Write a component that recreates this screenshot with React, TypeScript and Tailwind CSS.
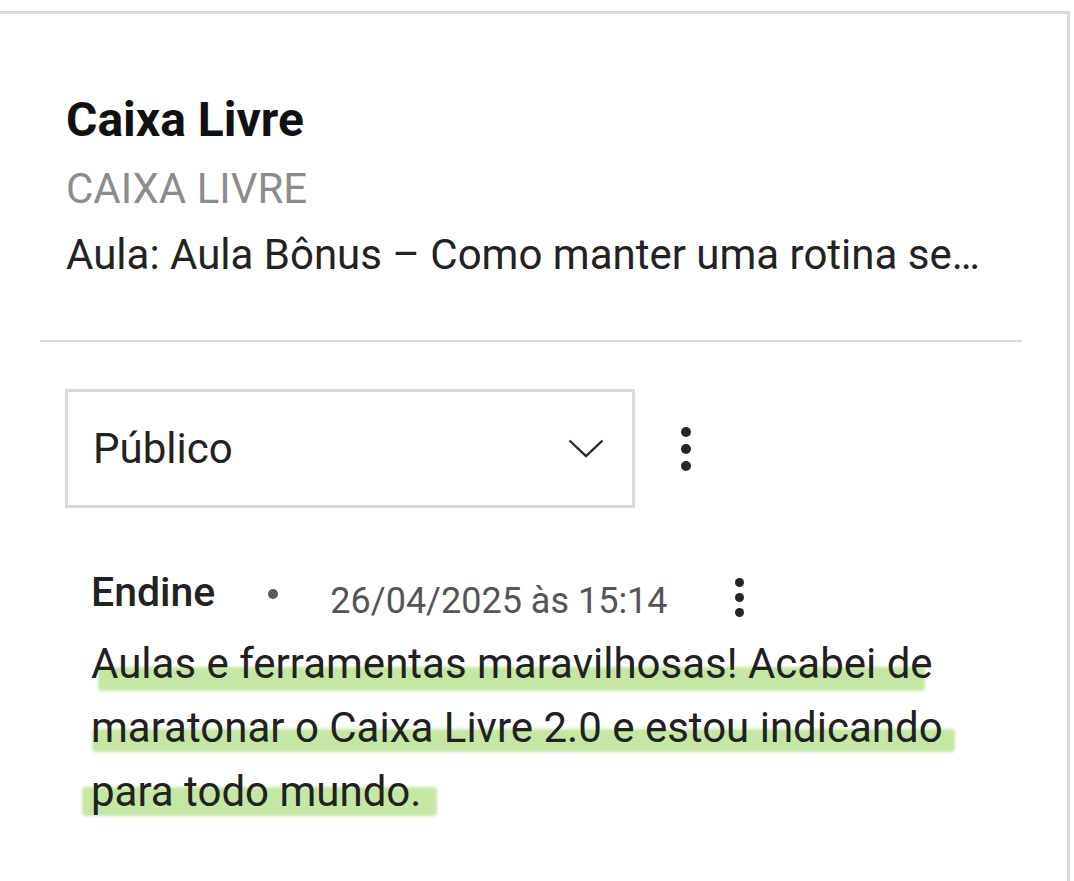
import React from "react"

function Dots({ r, gap, className }: { r: number; gap: number; className?: string }) {
  const h = r * 2 + gap * 2
  return (
    <svg width={r * 2} height={h} viewBox={`0 0 ${r * 2} ${h}`} className={className}>
      <circle cx={r} cy={r} r={r} fill="#262626" />
      <circle cx={r} cy={r + gap} r={r} fill="#262626" />
      <circle cx={r} cy={r + gap * 2} r={r} fill="#262626" />
    </svg>
  )
}

const lines = [
  { text: "Aulas e ferramentas maravilhosas! Acabei de", mark: "left-[7px] w-[827px] top-[35px] h-[24px]" },
  { text: "maratonar o Caixa Livre 2.0 e estou indicando", mark: "left-[1px] w-[863px] top-[33px] h-[23px]" },
  { text: "para todo mundo.", mark: "left-[-9px] w-[355px] top-[27px] h-[29px]" },
]

export default function App() {
  return (
    <div className="min-h-screen bg-white font-['Roboto',sans-serif] pt-[11px]">
      <div className="w-[1070px] h-[870px] border-t-[3px] border-r-[3px] border-[#dadada]">
        <div className="pl-[40px] pr-[45px]">
          <div className="pl-[26px] pt-[82px]">
            <h1 className="text-[48px] leading-none font-bold text-[#111]">Caixa Livre</h1>
            <p className="mt-[24px] text-[42px] leading-none text-[#8c8c8c]">CAIXA LIVRE</p>
            <p className="mt-[24px] text-[42px] leading-none text-[#222] whitespace-nowrap">
              Aula: Aula Bônus – Como manter uma rotina se…
            </p>
          </div>

          <div className="mt-[64px] h-[2px] bg-[#dadada]" />

          <div className="mt-[47px] pl-[25px] flex items-center">
            <div className="w-[570px] h-[119px] border-[3px] border-[#dadada] flex items-center justify-between pl-[25px] pr-[28px]">
              <span className="text-[42px] leading-none text-[#222]">Público</span>
              <svg width="36" height="19" viewBox="0 0 36 19" fill="none">
                <polyline points="1.5,1.5 18,17 34.5,1.5" stroke="#2a2a2a" strokeWidth="2.4" />
              </svg>
            </div>
            <Dots r={5} gap={17} className="ml-[46px]" />
          </div>

          <div className="mt-[64px] pl-[51px]">
            <div className="flex items-start h-[42px]">
              <span className="text-[41px] leading-none font-medium text-[#222]">Endine</span>
              <span className="ml-[53px] mt-[17px] w-[10px] h-[10px] rounded-full bg-[#5a5a5a]" />
              <span className="ml-[52px] mt-[11px] text-[36px] leading-none text-[#555]">26/04/2025 às 15:14</span>
              <Dots r={4.5} gap={15} className="ml-[67px] mt-[6px]" />
            </div>

            <div className="mt-[18px] text-[42px] leading-[64px] text-[#212121]">
              {lines.map((l) => (
                <div key={l.text} className="relative h-[64px] whitespace-nowrap">
                  <span className={`absolute ${l.mark} rounded-[4px] bg-[#c6e6a4] blur-[1.5px]`} />
                  <span className="relative">{l.text}</span>
                </div>
              ))}
            </div>
          </div>
        </div>
      </div>
    </div>
  )
}
